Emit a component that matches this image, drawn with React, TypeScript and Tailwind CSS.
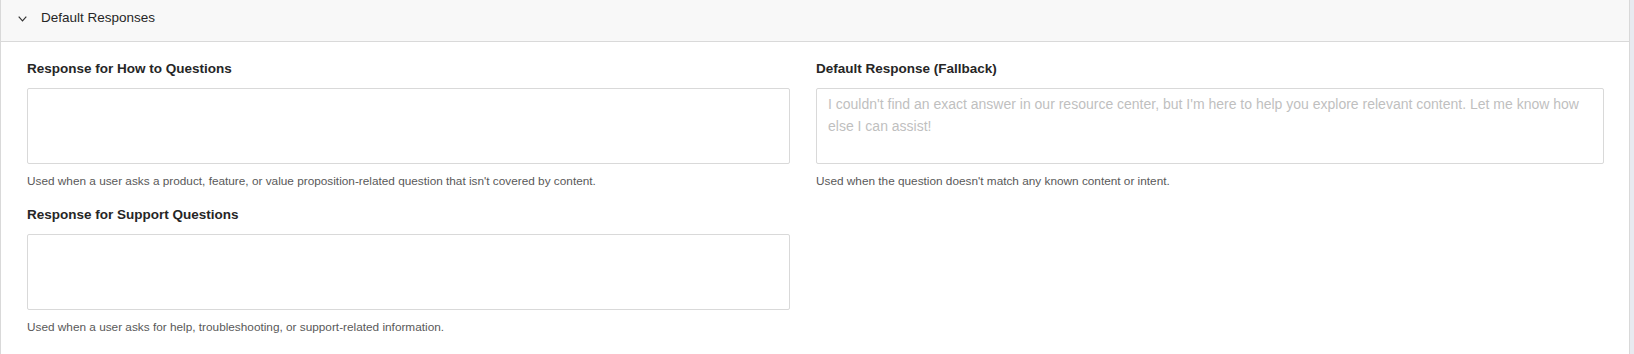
const fields = [
  {
    label: 'Response for How to Questions',
    help: "Used when a user asks a product, feature, or value proposition-related question that isn't covered by content.",
    placeholder: '',
  },
  {
    label: 'Default Response (Fallback)',
    help: "Used when the question doesn't match any known content or intent.",
    placeholder:
      "I couldn't find an exact answer in our resource center, but I'm here to help you explore relevant content. Let me know how else I can assist!",
  },
  {
    label: 'Response for Support Questions',
    help: 'Used when a user asks for help, troubleshooting, or support-related information.',
    placeholder: '',
  },
]

function Field({ label, help, placeholder }: { label: string; help: string; placeholder: string }) {
  return (
    <div className="flex flex-col">
      <label className="text-[13.5px] leading-[22px] font-semibold text-[#262626]">{label}</label>
      <textarea
        placeholder={placeholder}
        className="mt-[8px] h-[76px] w-full resize-none rounded-[2px] border border-[#d9d9d9] px-[11px] py-[4px] text-[14px] leading-[22px] text-[#262626] placeholder:text-[#bfbfbf] outline-none"
      />
      <p className="mt-[9px] text-[11.8px] leading-[16px] text-[#595959]">{help}</p>
    </div>
  )
}

export default function App() {
  return (
    <div className="flex h-[354px] w-full bg-white font-['Liberation_Sans',sans-serif]">
      <div className="flex-1 border-x border-[#d9d9d9]">
        <div className="flex h-[42px] items-center border-b border-[#d9d9d9] bg-[#f8f8f8] pl-[17px] pb-[4px]">
          <svg width="9" height="6" viewBox="0 0 9 6" fill="none" className="mr-[14px]">
            <polyline points="0.7,0.7 4.5,4.8 8.3,0.7" stroke="#333" strokeWidth="1.2" />
          </svg>
          <span className="text-[13.5px] text-[#262626]">Default Responses</span>
        </div>
        <div className="grid grid-cols-[763px_1fr] gap-x-[26px] gap-y-[15px] pl-[26px] pr-[25px] pt-[16px]">
          <Field {...fields[0]} />
          <Field {...fields[1]} />
          <Field {...fields[2]} />
        </div>
      </div>
      <div className="w-[4px] bg-[#e8eaf0]" />
    </div>
  )
}
